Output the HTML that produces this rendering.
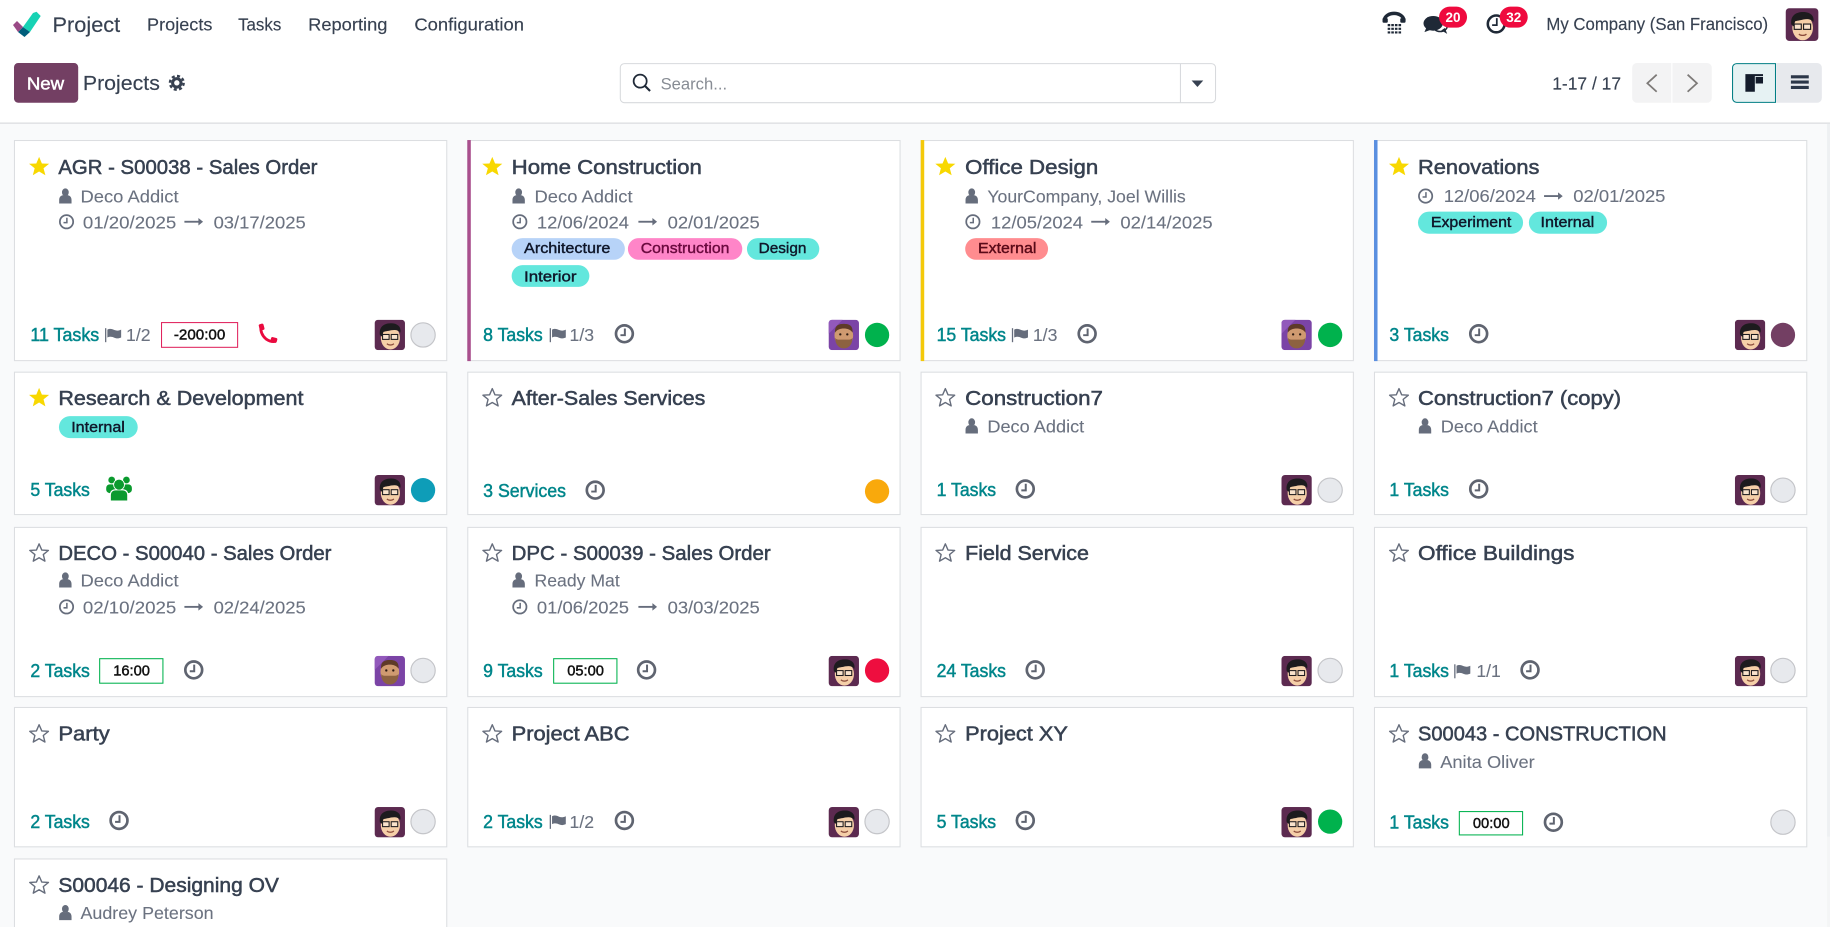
<!DOCTYPE html>
<html lang="en">
<head>
<meta charset="utf-8">
<title>Projects</title>
<style>
html,body{margin:0;padding:0;width:1830px;height:927px;overflow:hidden;background:#f9fafb}
svg{display:block;font-family:"Liberation Sans",sans-serif}
.t{font-size:17.4px;fill:#374151;stroke:#374151;stroke-width:.45px}
.m{font-size:15.2px;fill:#6b7280;stroke:#6b7280;stroke-width:.08px}
.k{font-size:15.6px;fill:#00868b;stroke:#00868b;stroke-width:.4px}
.n{font-size:15px;fill:#374151;stroke:#374151;stroke-width:.12px}
.g{font-size:12.8px;fill:#0f172a;stroke:#0f172a;stroke-width:.35px}
.b{font-size:13px;fill:#111;stroke:#111;stroke-width:.4px}
.c{fill:#fff;stroke:#dcdee1;stroke-width:.9}
</style>
</head>
<body>
<svg xmlns="http://www.w3.org/2000/svg" width="1830" height="927" viewBox="0 0 1568 794.3" preserveAspectRatio="none">
<defs>
<polygon id="sf" fill="#f8d800" points="0,-8.6 2.4,-2.9 8.6,-2.7 3.8,1.2 5.4,7.2 0,3.9 -5.4,7.2 -3.8,1.2 -8.6,-2.7 -2.4,-2.9"/>
<polygon id="so" fill="none" stroke="#666d7c" stroke-width="1.2" stroke-linejoin="round" points="0,-8 2.3,-2.7 8,-2.4 3.6,1.2 5,6.8 0,3.9 -5,6.8 -3.6,1.2 -8,-2.4 -2.3,-2.7"/>
<g id="ck" fill="none" stroke="#5f6470"><circle r="7.2" stroke-width="2.3"/><path d="M.4,-4.5V1.2H-3.4" stroke-width="1.7"/></g>
<g id="cs" fill="none" stroke="#666d7c"><circle r="5.7" stroke-width="1.5"/><path d="M.3,-3.4V.8H-2.6" stroke-width="1.3"/></g>
<g id="pr" fill="#666d7c"><ellipse cx="0" cy="-3.2" rx="2.9" ry="3.4"/><path d="M-5.3,6.4V3.4C-5.3,.6 -3.6,-.4 -2,-.8C-1,.2 1,.2 2,-.8C3.6,-.4 5.3,.6 5.3,3.4V6.4Z"/></g>
<g id="fl" fill="#666d7c"><rect x="-7" y="-5.8" width="1.1" height="12"/><path d="M-5,-4.6C-2.5,-5.8 -.6,-5 1,-4.2C3,-3.4 4.6,-3.6 6.8,-4.6V2.2C4.6,3.2 3,3.2 1,2.4C-.6,1.6 -2.5,1 -5,2.2Z"/></g>
<g id="ar" fill="#666d7c"><rect x="-8" y="-.8" width="13" height="1.6"/><path d="M4,-3.2L8,0L4,3.2Z"/></g>
<clipPath id="avc"><rect width="26" height="26" rx="3"/></clipPath>
<g id="av1" clip-path="url(#avc)">
<rect width="26" height="26" fill="#5c2a50"/>
<ellipse cx="13.5" cy="15.5" rx="8.2" ry="10" fill="#f5cfa8"/>
<path d="M4.5,13C3.5,6 8,3 14,3C20,3 23,6.5 22,11C20,8.5 17,8.5 14,9C11,9.8 8.5,10 7.5,10.5L6.4,14.5Z" fill="#1d1b1e"/>
<rect x="6.8" y="12.6" width="5.6" height="4.2" fill="#f9e3cc" stroke="#1d1b1e" stroke-width=".9"/>
<rect x="14.2" y="12.6" width="5.6" height="4.2" fill="#f9e3cc" stroke="#1d1b1e" stroke-width=".9"/>
<path d="M10.5,20.5C12,22 15,22 16.5,20.5" stroke="#8a4a3a" stroke-width="1" fill="none"/>
</g>
<g id="av2" clip-path="url(#avc)">
<rect width="26" height="26" fill="#7b44a6"/>
<path d="M0,0H12L0,12Z" fill="#9259bb"/>
<ellipse cx="13" cy="13.5" rx="8" ry="9.5" fill="#cf9a70"/>
<path d="M5.5,11C5,4.5 9,3.5 13,3.5C17,3.5 21,4.5 20.5,11C19,8.5 16,7.5 13,7.5C10,7.5 7,8.5 5.5,11Z" fill="#5e3a28"/>
<path d="M5.6,15.5C7,17.5 9,17 13,17C17,17 19,17.5 20.4,15.5C20.4,21.5 17,24.5 13,24.5C9,24.5 5.6,21.5 5.6,15.5Z" fill="#8d6240"/>
<circle cx="10" cy="12.5" r="1" fill="#2c1a12"/><circle cx="16" cy="12.5" r="1" fill="#2c1a12"/>
</g>
<circle id="st" r="10.4" fill="#e7e9ed" stroke="#c4c5c9" stroke-width="1"/>
</defs>

<!-- page -->
<rect width="1568" height="105.5" fill="#fff"/>
<rect y="105" width="1568" height="1" fill="#d8dadd"/>
<rect x="1565.5" y="106" width="2.5" height="611" fill="#eef0f2"/>
<rect x="1565.5" y="717" width="2.5" height="78" fill="#f4f5f6"/>

<!-- navbar -->
<g transform="scale(.857)">
<polygon fill="#17d2b4" points="23,27 33,13 36.5,11.7 40.7,16 30,32"/>
<polygon fill="#005f7c" points="18,32 23,27 30,32 24.5,37"/>
<polygon fill="#9a4a86" points="13,25 17,21 23,27 18,32"/>
</g>
<text x="45" y="27.3" font-size="18.4" fill="#374151" stroke="#374151" stroke-width=".12" textLength="58" lengthAdjust="spacingAndGlyphs">Project</text>
<text x="126" y="26" class="n" textLength="56" lengthAdjust="spacingAndGlyphs">Projects</text>
<text x="204" y="26" class="n" textLength="37" lengthAdjust="spacingAndGlyphs">Tasks</text>
<text x="264" y="26" class="n" textLength="68" lengthAdjust="spacingAndGlyphs">Reporting</text>
<text x="355" y="26" class="n" textLength="94" lengthAdjust="spacingAndGlyphs">Configuration</text>

<path d="M1186,17.5C1187,9.5 1202,9.5 1203,17.5" fill="none" stroke="#1f2937" stroke-width="3"/>
<rect x="1184.6" y="15.5" width="4.5" height="4" rx="1" fill="#1f2937"/><rect x="1199.8" y="15.5" width="4.5" height="4" rx="1" fill="#1f2937"/>
<path d="M1189,21.5h11.6M1189,24.7h11.6M1189,27.8h11.6" stroke="#1f2937" stroke-width="1.9" stroke-dasharray="2.2 .9" fill="none"/>

<ellipse cx="1234" cy="22.5" rx="6" ry="4.5" fill="none" stroke="#1f2937" stroke-width="1.3"/>
<path d="M1235,26L1240,29L1238,24Z" fill="#1f2937"/>
<ellipse cx="1228" cy="20" rx="8.3" ry="6.3" fill="#1f2937"/>
<path d="M1222,24L1220.5,27.5L1226,25.5Z" fill="#1f2937"/>
<rect x="1233" y="5.7" width="24" height="18" rx="9" fill="#ef0a3e"/>
<text x="1245" y="19" font-size="11.6" font-weight="700" fill="#fff" text-anchor="middle">20</text>

<circle cx="1282" cy="20.5" r="7.2" fill="none" stroke="#1f2937" stroke-width="2.2"/>
<path d="M1282.5,15.5V21.5H1278.5" fill="none" stroke="#1f2937" stroke-width="1.5"/>
<rect x="1285" y="5.7" width="24" height="18" rx="9" fill="#ef0a3e"/>
<text x="1297" y="19" font-size="11.6" font-weight="700" fill="#fff" text-anchor="middle">32</text>

<text x="1325" y="25.8" class="n" textLength="190" lengthAdjust="spacingAndGlyphs">My Company (San Francisco)</text>
<use href="#av1" transform="translate(1530,7) scale(1.08)"/>

<!-- control panel -->
<rect x="12" y="54" width="55" height="34" rx="3.5" fill="#733f63"/>
<text x="23" y="76.5" font-size="15" fill="#fff" stroke="#fff" stroke-width=".4" textLength="32" lengthAdjust="spacingAndGlyphs">New</text>
<text x="71" y="77" font-size="17.4" fill="#374151" stroke="#374151" stroke-width=".12" textLength="66" lengthAdjust="spacingAndGlyphs">Projects</text>
<circle cx="151.5" cy="71" r="3.6" fill="none" stroke="#374151" stroke-width="2.6"/>
<circle cx="151.5" cy="71" r="5.9" fill="none" stroke="#374151" stroke-width="2" stroke-dasharray="2.6 2.03"/>

<rect x="531.5" y="54.5" width="510" height="33.5" rx="3.5" fill="#fff" stroke="#d8dadd" stroke-width=".9"/>
<rect x="1011" y="54.5" width=".9" height="33.5" fill="#d8dadd"/>
<circle cx="548.5" cy="69.5" r="5.6" fill="none" stroke="#1f2937" stroke-width="1.5"/>
<path d="M552.6,73.6L557,78" stroke="#1f2937" stroke-width="1.8"/>
<text x="566" y="76.5" font-size="14.6" fill="#878c94" textLength="57" lengthAdjust="spacingAndGlyphs">Search...</text>
<path d="M1021,69H1031L1026,74.5Z" fill="#374151"/>

<text x="1330" y="76.5" class="n" textLength="59" lengthAdjust="spacingAndGlyphs">1-17 / 17</text>
<path d="M1398.5,58a4,4 0 0 1 4,-4H1432V88H1402.5a4,4 0 0 1 -4,-4Z" fill="#f3f3f4"/>
<path d="M1433,54H1462.7a4,4 0 0 1 4,4V84a4,4 0 0 1 -4,4H1433Z" fill="#f3f3f4"/>
<path d="M1419.5,64L1411.5,71.3L1419.5,78.6" fill="none" stroke="#7d7a78" stroke-width="1.5"/>
<path d="M1446,64L1454,71.3L1446,78.6" fill="none" stroke="#7d7a78" stroke-width="1.5"/>
<path d="M1488,54.5H1521.3V87.7H1488a3.5,3.5 0 0 1 -3.5,-3.5V58a3.5,3.5 0 0 1 3.5,-3.5Z" fill="#e6f2f3" stroke="#017e84" stroke-width=".9"/>
<path d="M1522,54H1557a4,4 0 0 1 4,4V84a4,4 0 0 1 -4,4H1522Z" fill="#e7e9ed"/>
<path d="M1495.5,63.5H1510.6V65.2H1503.6V78.6H1495.5ZM1504.3,66H1510.6V71.5H1504.3Z" fill="#131c2b"/>
<path d="M1534.5,64.5H1549.8V67.2H1534.5ZM1534.5,69H1549.8V71.7H1534.5ZM1534.5,73.6H1549.8V76.3H1534.5Z" fill="#2b3648"/>

<!-- ROW 1 -->
<rect class="c" x="12.4" y="120.4" width="370.4" height="188.6"/>
<rect class="c" x="400.8" y="120.4" width="370.4" height="188.6"/>
<rect class="c" x="789.2" y="120.4" width="370.4" height="188.6"/>
<rect class="c" x="1177.7" y="120.4" width="370.4" height="188.6"/>
<rect x="400.4" y="120" width="3" height="189.4" fill="#a94f8d"/>
<rect x="788.9" y="120" width="3" height="189.4" fill="#f4c909"/>
<rect x="1177.3" y="120" width="3" height="189.4" fill="#5a8fe0"/>

<use href="#sf" x="33.5" y="143"/>
<text x="50" y="149" class="t" textLength="222" lengthAdjust="spacingAndGlyphs">AGR - S00038 - Sales Order</text>
<use href="#pr" x="56" y="168"/>
<text x="69" y="173.4" class="m" textLength="84" lengthAdjust="spacingAndGlyphs">Deco Addict</text>
<use href="#cs" x="57" y="190"/>
<text x="71" y="195.7" class="m" textLength="80" lengthAdjust="spacingAndGlyphs">01/20/2025</text>
<use href="#ar" x="166" y="190"/>
<text x="183" y="195.7" class="m" textLength="79" lengthAdjust="spacingAndGlyphs">03/17/2025</text>
<text x="26" y="292" class="k" textLength="59" lengthAdjust="spacingAndGlyphs">11 Tasks</text>
<use href="#fl" x="97" y="287"/>
<text x="108" y="292" class="m" textLength="21" lengthAdjust="spacingAndGlyphs">1/2</text>
<rect x="138.4" y="276.4" width="65.2" height="21.2" fill="#fff" stroke="#e0245e" stroke-width=".9"/>
<text x="149" y="291" class="b" textLength="44" lengthAdjust="spacingAndGlyphs">-200:00</text>
<path d="M223.5,279C223,284 225,288 228,290.5C231,292.5 233.5,293 236,292.5" fill="none" stroke="#ea0a3f" stroke-width="2.4"/>
<rect x="222" y="277.5" width="4.2" height="5.5" rx="1.2" fill="#ea0a3f" transform="rotate(-15 224 280)"/>
<rect x="232" y="289" width="5.5" height="4.2" rx="1.2" fill="#ea0a3f" transform="rotate(15 234 291)"/>
<use href="#av1" x="321" y="274"/>
<use href="#st" x="362.5" y="287"/>

<use href="#sf" x="421.8" y="143"/>
<text x="438.4" y="149" class="t" textLength="163" lengthAdjust="spacingAndGlyphs">Home Construction</text>
<use href="#pr" x="444.4" y="168"/>
<text x="458" y="173.4" class="m" textLength="84" lengthAdjust="spacingAndGlyphs">Deco Addict</text>
<use href="#cs" x="445.4" y="190"/>
<text x="460" y="195.7" class="m" textLength="79" lengthAdjust="spacingAndGlyphs">12/06/2024</text>
<use href="#ar" x="555" y="190"/>
<text x="572" y="195.7" class="m" textLength="79" lengthAdjust="spacingAndGlyphs">02/01/2025</text>
<rect x="438.4" y="204" width="97" height="18.6" rx="9.3" fill="#b7d3f8"/>
<text x="449" y="217" class="g" textLength="74" lengthAdjust="spacingAndGlyphs">Architecture</text>
<rect x="538" y="204" width="98" height="18.6" rx="9.3" fill="#ff85c8"/>
<text x="549" y="217" class="g" style="fill:#6b0a3f;stroke:#6b0a3f" textLength="76" lengthAdjust="spacingAndGlyphs">Construction</text>
<rect x="640" y="204" width="62" height="18.6" rx="9.3" fill="#63e7dd"/>
<text x="650" y="217" class="g" textLength="41" lengthAdjust="spacingAndGlyphs">Design</text>
<rect x="438.4" y="227.2" width="66.6" height="18.6" rx="9.3" fill="#63e7dd"/>
<text x="449" y="241" class="g" textLength="45" lengthAdjust="spacingAndGlyphs">Interior</text>
<text x="414" y="292" class="k" textLength="51" lengthAdjust="spacingAndGlyphs">8 Tasks</text>
<use href="#fl" x="478" y="287"/>
<text x="488" y="292" class="m" textLength="21" lengthAdjust="spacingAndGlyphs">1/3</text>
<use href="#ck" x="535" y="286"/>
<use href="#av2" x="710" y="274"/>
<circle cx="751.5" cy="287" r="10.4" fill="#00b24d"/>

<use href="#sf" x="810" y="143"/>
<text x="827" y="149" class="t" textLength="114" lengthAdjust="spacingAndGlyphs">Office Design</text>
<use href="#pr" x="832.6" y="168"/>
<text x="846" y="173.4" class="m" textLength="170" lengthAdjust="spacingAndGlyphs">YourCompany, Joel Willis</text>
<use href="#cs" x="833.6" y="190"/>
<text x="849" y="195.7" class="m" textLength="79" lengthAdjust="spacingAndGlyphs">12/05/2024</text>
<use href="#ar" x="943" y="190"/>
<text x="960" y="195.7" class="m" textLength="79" lengthAdjust="spacingAndGlyphs">02/14/2025</text>
<rect x="827" y="204" width="71" height="18.6" rx="9.3" fill="#ff8c8f"/>
<text x="838" y="217" class="g" style="fill:#5a0a18;stroke:#5a0a18" textLength="50" lengthAdjust="spacingAndGlyphs">External</text>
<text x="802.5" y="292" class="k" textLength="59.5" lengthAdjust="spacingAndGlyphs">15 Tasks</text>
<use href="#fl" x="874" y="287"/>
<text x="885" y="292" class="m" textLength="21" lengthAdjust="spacingAndGlyphs">1/3</text>
<use href="#ck" x="931.5" y="286"/>
<use href="#av2" x="1098" y="274"/>
<circle cx="1139.7" cy="287" r="10.4" fill="#00b24d"/>

<use href="#sf" x="1198.7" y="143"/>
<text x="1215" y="149" class="t" textLength="104" lengthAdjust="spacingAndGlyphs">Renovations</text>
<use href="#cs" x="1221.5" y="168"/>
<text x="1237" y="173" class="m" textLength="79" lengthAdjust="spacingAndGlyphs">12/06/2024</text>
<use href="#ar" x="1331" y="168"/>
<text x="1348" y="173" class="m" textLength="79" lengthAdjust="spacingAndGlyphs">02/01/2025</text>
<rect x="1215" y="181.3" width="90" height="19" rx="9.5" fill="#63e7dd"/>
<text x="1226" y="194.5" class="g" textLength="69" lengthAdjust="spacingAndGlyphs">Experiment</text>
<rect x="1310" y="181.3" width="67" height="19" rx="9.5" fill="#63e7dd"/>
<text x="1320" y="194.5" class="g" textLength="46" lengthAdjust="spacingAndGlyphs">Internal</text>
<text x="1190.5" y="292" class="k" textLength="51" lengthAdjust="spacingAndGlyphs">3 Tasks</text>
<use href="#ck" x="1267" y="286"/>
<use href="#av1" x="1486.5" y="274"/>
<circle cx="1527.7" cy="287" r="10.4" fill="#733f63"/>

<!-- ROW 2 -->
<rect class="c" x="12.4" y="318.9" width="370.4" height="122"/>
<rect class="c" x="400.8" y="318.9" width="370.4" height="122"/>
<rect class="c" x="789.2" y="318.9" width="370.4" height="122"/>
<rect class="c" x="1177.7" y="318.9" width="370.4" height="122"/>

<use href="#sf" x="33.5" y="341"/>
<text x="50" y="347" class="t" textLength="210" lengthAdjust="spacingAndGlyphs">Research &amp; Development</text>
<rect x="50.5" y="356.6" width="67.5" height="18.8" rx="9.4" fill="#63e7dd"/>
<text x="61" y="370.3" class="g" textLength="46" lengthAdjust="spacingAndGlyphs">Internal</text>
<text x="26" y="425" class="k" textLength="51" lengthAdjust="spacingAndGlyphs">5 Tasks</text>
<g fill="#0a9a2e">
<circle cx="95.7" cy="411.3" r="2.9"/><circle cx="108.3" cy="411.3" r="2.9"/>
<rect x="91" y="415" width="8" height="7.5" rx="3"/><rect x="105" y="415" width="8" height="7.5" rx="3"/>
<circle cx="102" cy="415.3" r="5" fill="#fff"/>
<path d="M94,429.8V424.5C94,421 96,419.2 99,419.2H105C108,419.2 110,421 110,424.5V429.8Z" fill="#fff"/>
<circle cx="102" cy="415.3" r="4.3"/>
<path d="M95,428.8V424.5C95,421.8 96.5,420.2 99,420.2H105C107.5,420.2 109,421.8 109,424.5V428.8Z"/>
</g>
<use href="#av1" x="321" y="407"/>
<circle cx="362.5" cy="420" r="10.4" fill="#0e9db8"/>

<use href="#so" x="421.8" y="341"/>
<text x="438.4" y="347" class="t" textLength="166" lengthAdjust="spacingAndGlyphs">After-Sales Services</text>
<text x="414" y="426" class="k" textLength="71" lengthAdjust="spacingAndGlyphs">3 Services</text>
<use href="#ck" x="510" y="420"/>
<circle cx="751.5" cy="421" r="10.4" fill="#f9a90c"/>

<use href="#so" x="810" y="341"/>
<text x="827" y="347" class="t" textLength="118" lengthAdjust="spacingAndGlyphs">Construction7</text>
<use href="#pr" x="832.6" y="365"/>
<text x="846" y="370.4" class="m" textLength="83" lengthAdjust="spacingAndGlyphs">Deco Addict</text>
<text x="802.5" y="425" class="k" textLength="51" lengthAdjust="spacingAndGlyphs">1 Tasks</text>
<use href="#ck" x="878.5" y="419"/>
<use href="#av1" x="1098" y="407"/>
<use href="#st" x="1139.7" y="420"/>

<use href="#so" x="1198.7" y="341"/>
<text x="1215" y="347" class="t" textLength="174" lengthAdjust="spacingAndGlyphs">Construction7 (copy)</text>
<use href="#pr" x="1221" y="365"/>
<text x="1234.5" y="370.4" class="m" textLength="83" lengthAdjust="spacingAndGlyphs">Deco Addict</text>
<text x="1190.5" y="425" class="k" textLength="51" lengthAdjust="spacingAndGlyphs">1 Tasks</text>
<use href="#ck" x="1267" y="419"/>
<use href="#av1" x="1486.5" y="407"/>
<use href="#st" x="1527.7" y="420"/>

<!-- ROW 3 -->
<rect class="c" x="12.4" y="451.9" width="370.4" height="145"/>
<rect class="c" x="400.8" y="451.9" width="370.4" height="145"/>
<rect class="c" x="789.2" y="451.9" width="370.4" height="145"/>
<rect class="c" x="1177.7" y="451.9" width="370.4" height="145"/>

<use href="#so" x="33.5" y="474"/>
<text x="50" y="480" class="t" textLength="234" lengthAdjust="spacingAndGlyphs">DECO - S00040 - Sales Order</text>
<use href="#pr" x="56" y="497"/>
<text x="69" y="502.7" class="m" textLength="84" lengthAdjust="spacingAndGlyphs">Deco Addict</text>
<use href="#cs" x="57" y="520"/>
<text x="71" y="525.5" class="m" textLength="80" lengthAdjust="spacingAndGlyphs">02/10/2025</text>
<use href="#ar" x="166" y="520"/>
<text x="183" y="525.5" class="m" textLength="79" lengthAdjust="spacingAndGlyphs">02/24/2025</text>
<text x="26" y="580" class="k" textLength="51" lengthAdjust="spacingAndGlyphs">2 Tasks</text>
<rect x="85.4" y="564.4" width="54.2" height="21" fill="#fff" stroke="#00b24d" stroke-width=".9"/>
<text x="97" y="579" class="b" textLength="31.5" lengthAdjust="spacingAndGlyphs">16:00</text>
<use href="#ck" x="166" y="574"/>
<use href="#av2" x="321" y="562"/>
<use href="#st" x="362.5" y="574.5"/>

<use href="#so" x="421.8" y="474"/>
<text x="438.4" y="480" class="t" textLength="222" lengthAdjust="spacingAndGlyphs">DPC - S00039 - Sales Order</text>
<use href="#pr" x="444.4" y="497"/>
<text x="458" y="502.7" class="m" textLength="73" lengthAdjust="spacingAndGlyphs">Ready Mat</text>
<use href="#cs" x="445.4" y="520"/>
<text x="460" y="525.5" class="m" textLength="79" lengthAdjust="spacingAndGlyphs">01/06/2025</text>
<use href="#ar" x="555" y="520"/>
<text x="572" y="525.5" class="m" textLength="79" lengthAdjust="spacingAndGlyphs">03/03/2025</text>
<text x="414" y="580" class="k" textLength="51" lengthAdjust="spacingAndGlyphs">9 Tasks</text>
<rect x="474.4" y="564.4" width="54.2" height="21" fill="#fff" stroke="#00b24d" stroke-width=".9"/>
<text x="486" y="579" class="b" textLength="31.5" lengthAdjust="spacingAndGlyphs">05:00</text>
<use href="#ck" x="554" y="574"/>
<use href="#av1" x="710" y="562"/>
<circle cx="751.5" cy="574.5" r="10.4" fill="#ee0e3f"/>

<use href="#so" x="810" y="474"/>
<text x="827" y="480" class="t" textLength="106" lengthAdjust="spacingAndGlyphs">Field Service</text>
<text x="802.5" y="580" class="k" textLength="59.5" lengthAdjust="spacingAndGlyphs">24 Tasks</text>
<use href="#ck" x="887" y="574"/>
<use href="#av1" x="1098" y="562"/>
<use href="#st" x="1139.7" y="574.5"/>

<use href="#so" x="1198.7" y="474"/>
<text x="1215" y="480" class="t" textLength="134" lengthAdjust="spacingAndGlyphs">Office Buildings</text>
<text x="1190.5" y="580" class="k" textLength="51" lengthAdjust="spacingAndGlyphs">1 Tasks</text>
<use href="#fl" x="1253" y="575"/>
<text x="1265" y="580" class="m" textLength="21" lengthAdjust="spacingAndGlyphs">1/1</text>
<use href="#ck" x="1311" y="574"/>
<use href="#av1" x="1486.5" y="562"/>
<use href="#st" x="1527.7" y="574.5"/>

<!-- ROW 4 -->
<rect class="c" x="12.4" y="606.2" width="370.4" height="119.4"/>
<rect class="c" x="400.8" y="606.2" width="370.4" height="119.4"/>
<rect class="c" x="789.2" y="606.2" width="370.4" height="119.4"/>
<rect class="c" x="1177.7" y="606.2" width="370.4" height="119.4"/>

<use href="#so" x="33.5" y="629"/>
<text x="50" y="634.7" class="t" textLength="44" lengthAdjust="spacingAndGlyphs">Party</text>
<text x="26" y="709.5" class="k" textLength="51" lengthAdjust="spacingAndGlyphs">2 Tasks</text>
<use href="#ck" x="102" y="703"/>
<use href="#av1" x="321" y="691.5"/>
<use href="#st" x="362.5" y="704"/>

<use href="#so" x="421.8" y="629"/>
<text x="438.4" y="634.7" class="t" textLength="101" lengthAdjust="spacingAndGlyphs">Project ABC</text>
<text x="414" y="709.5" class="k" textLength="51" lengthAdjust="spacingAndGlyphs">2 Tasks</text>
<use href="#fl" x="478" y="704"/>
<text x="488" y="709.5" class="m" textLength="21" lengthAdjust="spacingAndGlyphs">1/2</text>
<use href="#ck" x="535" y="703"/>
<use href="#av1" x="710" y="691.5"/>
<use href="#st" x="751.5" y="704"/>

<use href="#so" x="810" y="629"/>
<text x="827" y="634.7" class="t" textLength="88" lengthAdjust="spacingAndGlyphs">Project XY</text>
<text x="802.5" y="709.5" class="k" textLength="51" lengthAdjust="spacingAndGlyphs">5 Tasks</text>
<use href="#ck" x="878.5" y="703"/>
<use href="#av1" x="1098" y="691.5"/>
<circle cx="1139.7" cy="704" r="10.4" fill="#00b24d"/>

<use href="#so" x="1198.7" y="629"/>
<text x="1215" y="634.7" class="t" textLength="213" lengthAdjust="spacingAndGlyphs">S00043 - CONSTRUCTION</text>
<use href="#pr" x="1221" y="652"/>
<text x="1234" y="658" class="m" textLength="81" lengthAdjust="spacingAndGlyphs">Anita Oliver</text>
<text x="1190.5" y="710" class="k" textLength="51" lengthAdjust="spacingAndGlyphs">1 Tasks</text>
<rect x="1250.4" y="695.4" width="54.2" height="20" fill="#fff" stroke="#00b24d" stroke-width=".9"/>
<text x="1262" y="709.3" class="b" textLength="31.5" lengthAdjust="spacingAndGlyphs">00:00</text>
<use href="#ck" x="1331" y="704.5"/>
<use href="#st" x="1527.7" y="704.5"/>

<!-- ROW 5 -->
<rect class="c" x="12.4" y="736" width="370.4" height="70"/>
<use href="#so" x="33.5" y="758.5"/>
<text x="50" y="764.5" class="t" textLength="189" lengthAdjust="spacingAndGlyphs">S00046 - Designing OV</text>
<use href="#pr" x="56" y="782"/>
<text x="69" y="787.5" class="m" textLength="114" lengthAdjust="spacingAndGlyphs">Audrey Peterson</text>
</svg>
</body>
</html>
